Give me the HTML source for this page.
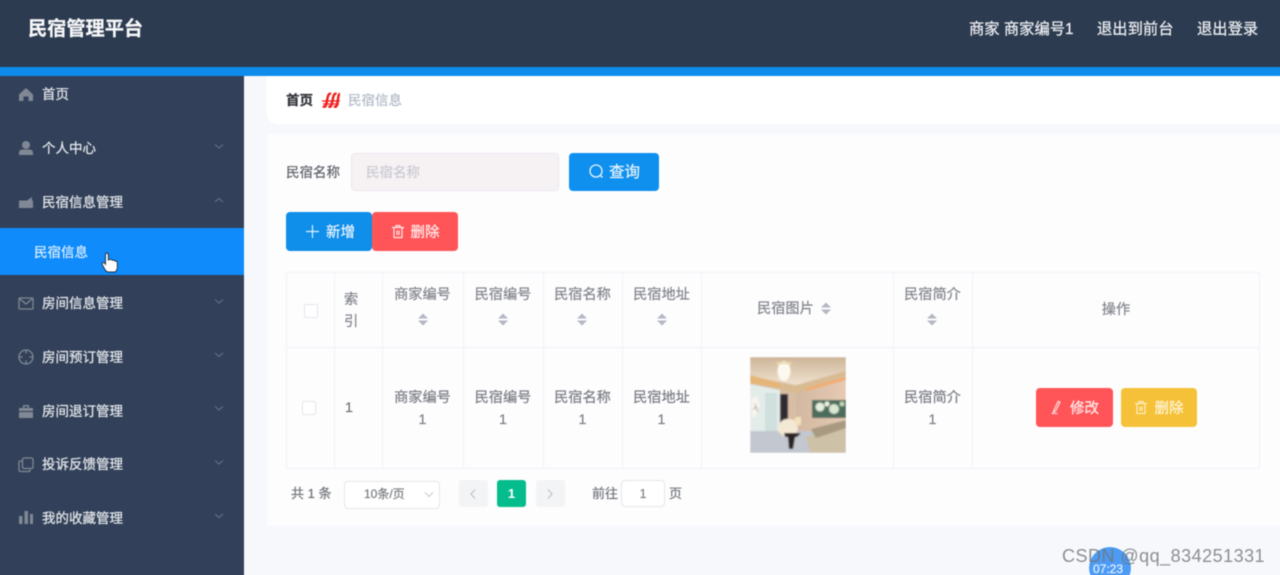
<!DOCTYPE html>
<html lang="zh"><head><meta charset="utf-8"><title>民宿管理平台</title>
<style>
html,body{margin:0;padding:0;width:1280px;height:575px;overflow:hidden;background:#f6f8fc}
body{font-family:"Liberation Sans","Noto Sans CJK SC",sans-serif;position:relative}
#w{position:absolute;left:-10px;top:-10px;width:1300px;height:595px;overflow:hidden;filter:blur(.5px);background:#f6f8fc}
#i{position:absolute;left:10px;top:10px;width:1280px;height:575px}
.a{position:absolute}
.t{position:absolute;white-space:nowrap;line-height:20px;-webkit-text-stroke:.25px currentColor}
.c{text-align:center}
.m{color:#e4e7eb;font-size:13.5px;left:42px}
.h{color:#eceef1;font-size:15.3px;top:20px}
.th{color:#85888f;font-size:14.2px}
.td{color:#7d8087;font-size:14.2px}
.vl{position:absolute;top:272px;height:196px;width:1px;background:#f0f2f9}
svg{position:absolute;overflow:visible}
.btn{position:absolute;border-radius:4px;color:#fff;font-size:14px;text-align:center;-webkit-text-stroke:.25px currentColor}
</style></head><body><div id="w"><div id="i">
<div class="a" style="left:-10px;top:-10px;width:1300px;height:77px;background:#2c3b50"></div>
<div class="a" style="left:-10px;top:67px;width:1300px;height:9px;background:#0d8cec"></div>
<div class="t" style="left:28px;top:20px;color:#f6f7f8;font-size:19.2px;font-weight:700">民宿管理平台</div>
<div class="t h" style="left:969px">商家 商家编号1</div>
<div class="t h" style="left:1097px">退出到前台</div>
<div class="t h" style="left:1197px">退出登录</div>

<div class="a" style="left:-10px;top:76px;width:254px;height:510px;background:#324159"></div>
<div class="a" style="left:-10px;top:228px;width:254px;height:47px;background:#0f8bfb"></div>

<div class="t m" style="top:85px">首页</div>
<div class="t m" style="top:139px">个人中心</div>
<div class="t m" style="top:193px">民宿信息管理</div>
<div class="t" style="left:34px;top:243px;font-size:13.5px;color:#d5ecff">民宿信息</div>
<div class="t m" style="top:294px">房间信息管理</div>
<div class="t m" style="top:348px">房间预订管理</div>
<div class="t m" style="top:402px">房间退订管理</div>
<div class="t m" style="top:455px">投诉反馈管理</div>
<div class="t m" style="top:509px">我的收藏管理</div>

<svg style="left:0;top:0" width="244" height="575" fill="none">
<g fill="#7f8894">
<path d="M19 94.500 26 88l7 6.500V101h-4.500v-4.500h-5V101H19z"/>
<circle cx="26" cy="145" r="4"/><path d="M19 155v-2.500q0-3 4-3h6q4 0 4 3V155z"/>
<path d="M19 200.500h8l5-3.500v3.500h1V208H19z"/>
<path d="M19 408h14v3H19zM19 412h14v6H19zM23 408v-3h6v3h-1.500v-1.600h-3V408z"/>
<rect x="19" y="516" width="3.500" height="8"/><rect x="24.500" y="511" width="3.500" height="13"/><rect x="30" y="514" width="3" height="10"/>
</g>
<g stroke="#7f8894" stroke-width="1.300">
<rect x="19" y="298" width="14" height="11" rx="1"/><path d="M19.500 298.500 26 304l6.500-5.500"/>
<circle cx="26" cy="357" r="7"/><path d="M26 349.500v4M26 360.500v4M18.500 357h4M29.500 357h4"/>
<rect x="22.500" y="458" width="10.500" height="10.500" rx="1.500"/><path d="M22 461h-2a1 1 0 0 0-1 1v8a1.500 1.500 0 0 0 1.500 1.500H29a1 1 0 0 0 1-1v-1"/>
</g>
<g stroke="#667284" stroke-width="1.100">
<path d="M215 144.500l4 3.500 4-3.500"/><path d="M215 202l4-3.500 4 3.500"/>
<path d="M215 299.500l4 3.500 4-3.500"/><path d="M215 353l4 3.500 4-3.500"/><path d="M215 406.500l4 3.500 4-3.500"/><path d="M215 460.500l4 3.500 4-3.500"/><path d="M215 514l4 3.500 4-3.500"/>
</g>
<path d="M105.500 270.500l-3-5.500q-1-2 .5-2.300t2.500 1.500V254.800q0-1.800 1.300-1.800t1.500 1.800V260q3-1.300 4 .3 2.300-.6 3 .9 2-.2 2 2V267q0 3-2 5h-7.500z" fill="#fff" stroke="#222a35" stroke-width=".9"/>
</svg>

<div class="a" style="left:267px;top:76px;width:1030px;height:48px;background:#fff;border-radius:0 0 0 10px"></div>
<div class="t" style="left:286px;top:91px;font-size:13.500px;font-weight:700;color:#33363b">首页</div>
<svg style="left:322px;top:92px" width="18" height="16" fill="none" stroke="#ee1c1c" stroke-width="2.400">
<path d="M1 14q2 2 3-1l2-9q1-3 3-2M6.500 14q2 2 3-1l2-9q1-3 3-2M12 14q2 2 3-1l1.500-9q.5-2 1.500-2"/><path d="M0 9h18M1 12h16" stroke-width="1.200"/>
</svg>
<div class="t" style="left:348px;top:91px;font-size:13.500px;color:#b4bbc8">民宿信息</div>

<div class="a" style="left:267px;top:134px;width:1030px;height:392px;background:#fdfdfe"></div>
<div class="t" style="left:286px;top:163px;font-size:13.500px;color:#64676c">民宿名称</div>
<div class="a" style="left:351px;top:153px;width:208px;height:38px;box-sizing:border-box;background:#f6f1f3;border:1px solid #e9e7ee;border-radius:4px"></div>
<div class="t" style="left:366px;top:163px;font-size:13.500px;color:#c9ccd3">民宿名称</div>
<div class="btn" style="left:569px;top:153px;width:90px;height:38px;line-height:40px;background:#0f90ee;font-size:15.500px;text-indent:21px;color:#e6f3fd">查询</div>
<svg style="left:589px;top:164px" width="15" height="15" fill="none" stroke="#e6f3fd" stroke-width="1.300"><circle cx="7" cy="7" r="6"/><path d="M11 11l2.500 2.500"/></svg>
<div class="btn" style="left:286px;top:212px;width:86px;height:39px;line-height:42px;background:#0f8eea;font-size:14.500px;text-indent:23px;color:#e6f3fd">新增</div>
<svg style="left:306px;top:225px" width="13" height="13" stroke="#dff0fc" stroke-width="1.200"><path d="M6.500 0v13M0 6.500h13"/></svg>
<div class="btn" style="left:372px;top:212px;width:86px;height:39px;line-height:42px;background:#ff5558;font-size:14.500px;text-indent:20px;color:#ffeaea">删除</div>
<svg style="left:392px;top:225px" width="12" height="13" fill="none" stroke="#ffe9e9" stroke-width="1.200"><path d="M0 2.500h12M2 2.500V12.500h8V2.500M4 2.500V.6h4v1.900M5 5.500v4.500M7 5.500v4.500"/></svg>

<div class="a" style="left:286px;top:272px;width:974px;height:197px;box-sizing:border-box;border:1px solid #f0f2f9"></div>
<div class="a" style="left:287px;top:347px;width:972px;height:1px;background:#f0f2f9"></div>
<div class="vl" style="left:334px"></div><div class="vl" style="left:382px"></div><div class="vl" style="left:463px"></div><div class="vl" style="left:543px"></div><div class="vl" style="left:622px"></div><div class="vl" style="left:701px"></div><div class="vl" style="left:893px"></div><div class="vl" style="left:972px"></div>

<div class="a" style="left:304px;top:304px;width:12px;height:12px;border:1px solid #e6e7ec;border-radius:2px;background:#fff"></div>
<div class="a" style="left:302px;top:401px;width:12px;height:12px;border:1px solid #e6e7ec;border-radius:2px;background:#fff"></div>

<div class="t th" style="left:344px;top:290px">索</div>
<div class="t th" style="left:344px;top:312px">引</div>
<div class="t th c" style="left:383px;width:79px;top:285px">商家编号</div>
<div class="t th c" style="left:464px;width:78px;top:285px">民宿编号</div>
<div class="t th c" style="left:544px;width:77px;top:285px">民宿名称</div>
<div class="t th c" style="left:623px;width:77px;top:285px">民宿地址</div>
<div class="t th" style="left:757px;top:299px">民宿图片</div>
<div class="t th c" style="left:894px;width:77px;top:285px">民宿简介</div>
<div class="t th c" style="left:973px;width:286px;top:300px">操作</div>

<svg style="left:0;top:0" width="1280" height="575" fill="#b4b8c4">
<path d="M418 318.500l5-5 5 5zM418 320.500l5 5 5-5z"/>
<path d="M498 318.500l5-5 5 5zM498 320.500l5 5 5-5z"/>
<path d="M577 318.500l5-5 5 5zM577 320.500l5 5 5-5z"/>
<path d="M657 318.500l5-5 5 5zM657 320.500l5 5 5-5z"/>
<path d="M821 307.500l5-5 5 5zM821 309.500l5 5 5-5z"/>
<path d="M927 318.500l5-5 5 5zM927 320.500l5 5 5-5z"/>
</svg>

<div class="t td" style="left:345px;top:398px;color:#70737a">1</div>
<div class="t td c" style="left:383px;width:79px;top:388px">商家编号</div><div class="t td c" style="left:383px;width:79px;top:410px">1</div>
<div class="t td c" style="left:464px;width:78px;top:388px">民宿编号</div><div class="t td c" style="left:464px;width:78px;top:410px">1</div>
<div class="t td c" style="left:544px;width:77px;top:388px">民宿名称</div><div class="t td c" style="left:544px;width:77px;top:410px">1</div>
<div class="t td c" style="left:623px;width:77px;top:388px">民宿地址</div><div class="t td c" style="left:623px;width:77px;top:410px">1</div>
<div class="t td c" style="left:894px;width:77px;top:388px">民宿简介</div><div class="t td c" style="left:894px;width:77px;top:410px">1</div>

<svg style="left:750px;top:357px" width="96" height="96" viewBox="0 0 96 96">
<defs><filter id="b" x="-5%" y="-5%" width="110%" height="110%"><feGaussianBlur stdDeviation="0.800"/></filter>
<linearGradient id="wall" x1="0" y1="0" x2="1" y2="0"><stop offset="0" stop-color="#d2b8a0"/><stop offset="1" stop-color="#e6cab3"/></linearGradient>
<linearGradient id="ceil" x1="0" y1="0" x2="0" y2="1"><stop offset="0" stop-color="#cdb497"/><stop offset="1" stop-color="#f0e3d0"/></linearGradient></defs>
<clipPath id="cp"><rect width="96" height="96"/></clipPath>
<g clip-path="url(#cp)"><g filter="url(#b)">
<rect width="96" height="96" fill="#d8bea4"/>
<path d="M0 0h96v14L46 28 0 19z" fill="url(#ceil)"/>
<path d="M0 19l46 10 50-15v5L46 36 0 26z" fill="#d9bb92"/>
<path d="M46 36 96 21v75H46z" fill="url(#wall)"/>
<path d="M56 31 96 20v3L56 34z" fill="#f2ab6e"/>
<path d="M0 18l30 8v5L0 26z" fill="#e6b677"/>
<path d="M0 27l30 6v60H0z" fill="#e4ecea"/>
<path d="M15 36h12v44H15z" fill="#cfe0dd"/>
<path d="M1 42l6-3 3 9-4 12H2z" fill="#f6f4ee"/>
<path d="M5 47l3 8M3 52l4-2" stroke="#b9a99a" stroke-width="1"/>
<rect x="30" y="37" width="8" height="42" fill="#2e2a33"/>
<rect x="62" y="43" width="34" height="18" fill="#4d6c5c"/>
<circle cx="70" cy="50" r="4.500" fill="#e4eee0"/><circle cx="84" cy="52" r="5" fill="#dbe7d2"/><circle cx="77" cy="47" r="2.500" fill="#f2f4e4"/><circle cx="92" cy="47" r="2.500" fill="#c5d6b8"/>
<ellipse cx="34" cy="14" rx="6.500" ry="10" fill="#fcf8ee"/>
<path d="M26 6h16" stroke="#e9d8a8" stroke-width="2"/>
<path d="M0 74 60 74 96 92V96H0z" fill="#c3c8d0"/>
<path d="M56 80 96 70v26H60z" fill="#cdc1a8"/>
<path d="M61 72 96 63v8L66 81z" fill="#a89a80"/>
<path d="M28 74q1-13 11-12 9 0 9 10l-3 8H34z" fill="#f3e9d4"/>
<rect x="45" y="60" width="6" height="8" fill="#f4e2bd"/>
<path d="M34 76h17l-4 4h-2l-2 12h-4l-1-12h-3z" fill="#2a2320"/>
</g></g></svg>

<div class="btn" style="left:1036px;top:388px;width:77px;height:39px;line-height:42px;background:#ff5558;font-size:14.500px;text-indent:20px;color:#ffeaea">修改</div>
<svg style="left:1051px;top:401px" width="12" height="13" fill="none" stroke="#ffe4e4" stroke-width="1.100"><path d="M3 9l-.8 2.200L4.500 10.200l4.500-9-1.800-.9zM.5 12.500h6"/></svg>
<div class="btn" style="left:1121px;top:388px;width:76px;height:39px;line-height:42px;background:#f5c138;font-size:14.500px;text-indent:20px;color:#fdf3d4">删除</div>
<svg style="left:1135px;top:401px" width="12" height="13" fill="none" stroke="#fdf3d4" stroke-width="1.100"><path d="M0 2.500h12M2 2.500V12.500h8V2.500M4 2.500V.6h4v1.900M5 5.500v4.500M7 5.500v4.500"/></svg>

<div class="t" style="left:291px;top:484px;font-size:13px;color:#75787e">共 1 条</div>
<div class="a" style="left:344px;top:481px;width:94px;height:26px;border:1px solid #e4e6ec;border-radius:4px;background:#fff"></div>
<div class="t" style="left:364px;top:484px;font-size:12px;color:#7c7f85">10条/页</div>
<svg style="left:424px;top:492px" width="10" height="6" fill="none" stroke="#c5c8cf"><path d="M1 .5l4 4 4-4"/></svg>
<div class="a" style="left:459px;top:480px;width:29px;height:27px;background:#f3f4f6;border-radius:3px"></div>
<svg style="left:470px;top:489px" width="6" height="10" fill="none" stroke="#c0c3c9" stroke-width="1.200"><path d="M5 .5l-4 4.500 4 4.500"/></svg>
<div class="a" style="left:497px;top:480px;width:29px;height:27px;line-height:27px;background:#05bd8c;border-radius:3px;color:#fff;font-size:13px;font-weight:700;text-align:center">1</div>
<div class="a" style="left:536px;top:480px;width:29px;height:27px;background:#f3f4f6;border-radius:3px"></div>
<svg style="left:547px;top:489px" width="6" height="10" fill="none" stroke="#c0c3c9" stroke-width="1.200"><path d="M1 .5l4 4.500-4 4.500"/></svg>
<div class="t" style="left:592px;top:484px;font-size:13px;color:#75787e">前往</div>
<div class="a" style="left:621px;top:480px;width:42px;height:25px;line-height:25px;border:1px solid #e4e6ec;border-radius:4px;background:#fff;font-size:13px;color:#70737a;text-align:center">1</div>
<div class="t" style="left:669px;top:484px;font-size:13px;color:#75787e">页</div>

<div class="a" style="left:1089px;top:547px;width:42px;height:42px;border-radius:50%;background:#4c9bf5;box-shadow:0 0 0 1px #fff"></div>
<div class="t" style="left:1093px;top:559px;font-size:12px;color:#e4f0fe">07:23</div>
<div class="t" style="left:1062px;top:546px;font-size:18px;letter-spacing:.48px;color:rgba(115,115,115,.8);-webkit-text-stroke:0">CSDN @qq_834251331</div>
</div></div></body></html>
